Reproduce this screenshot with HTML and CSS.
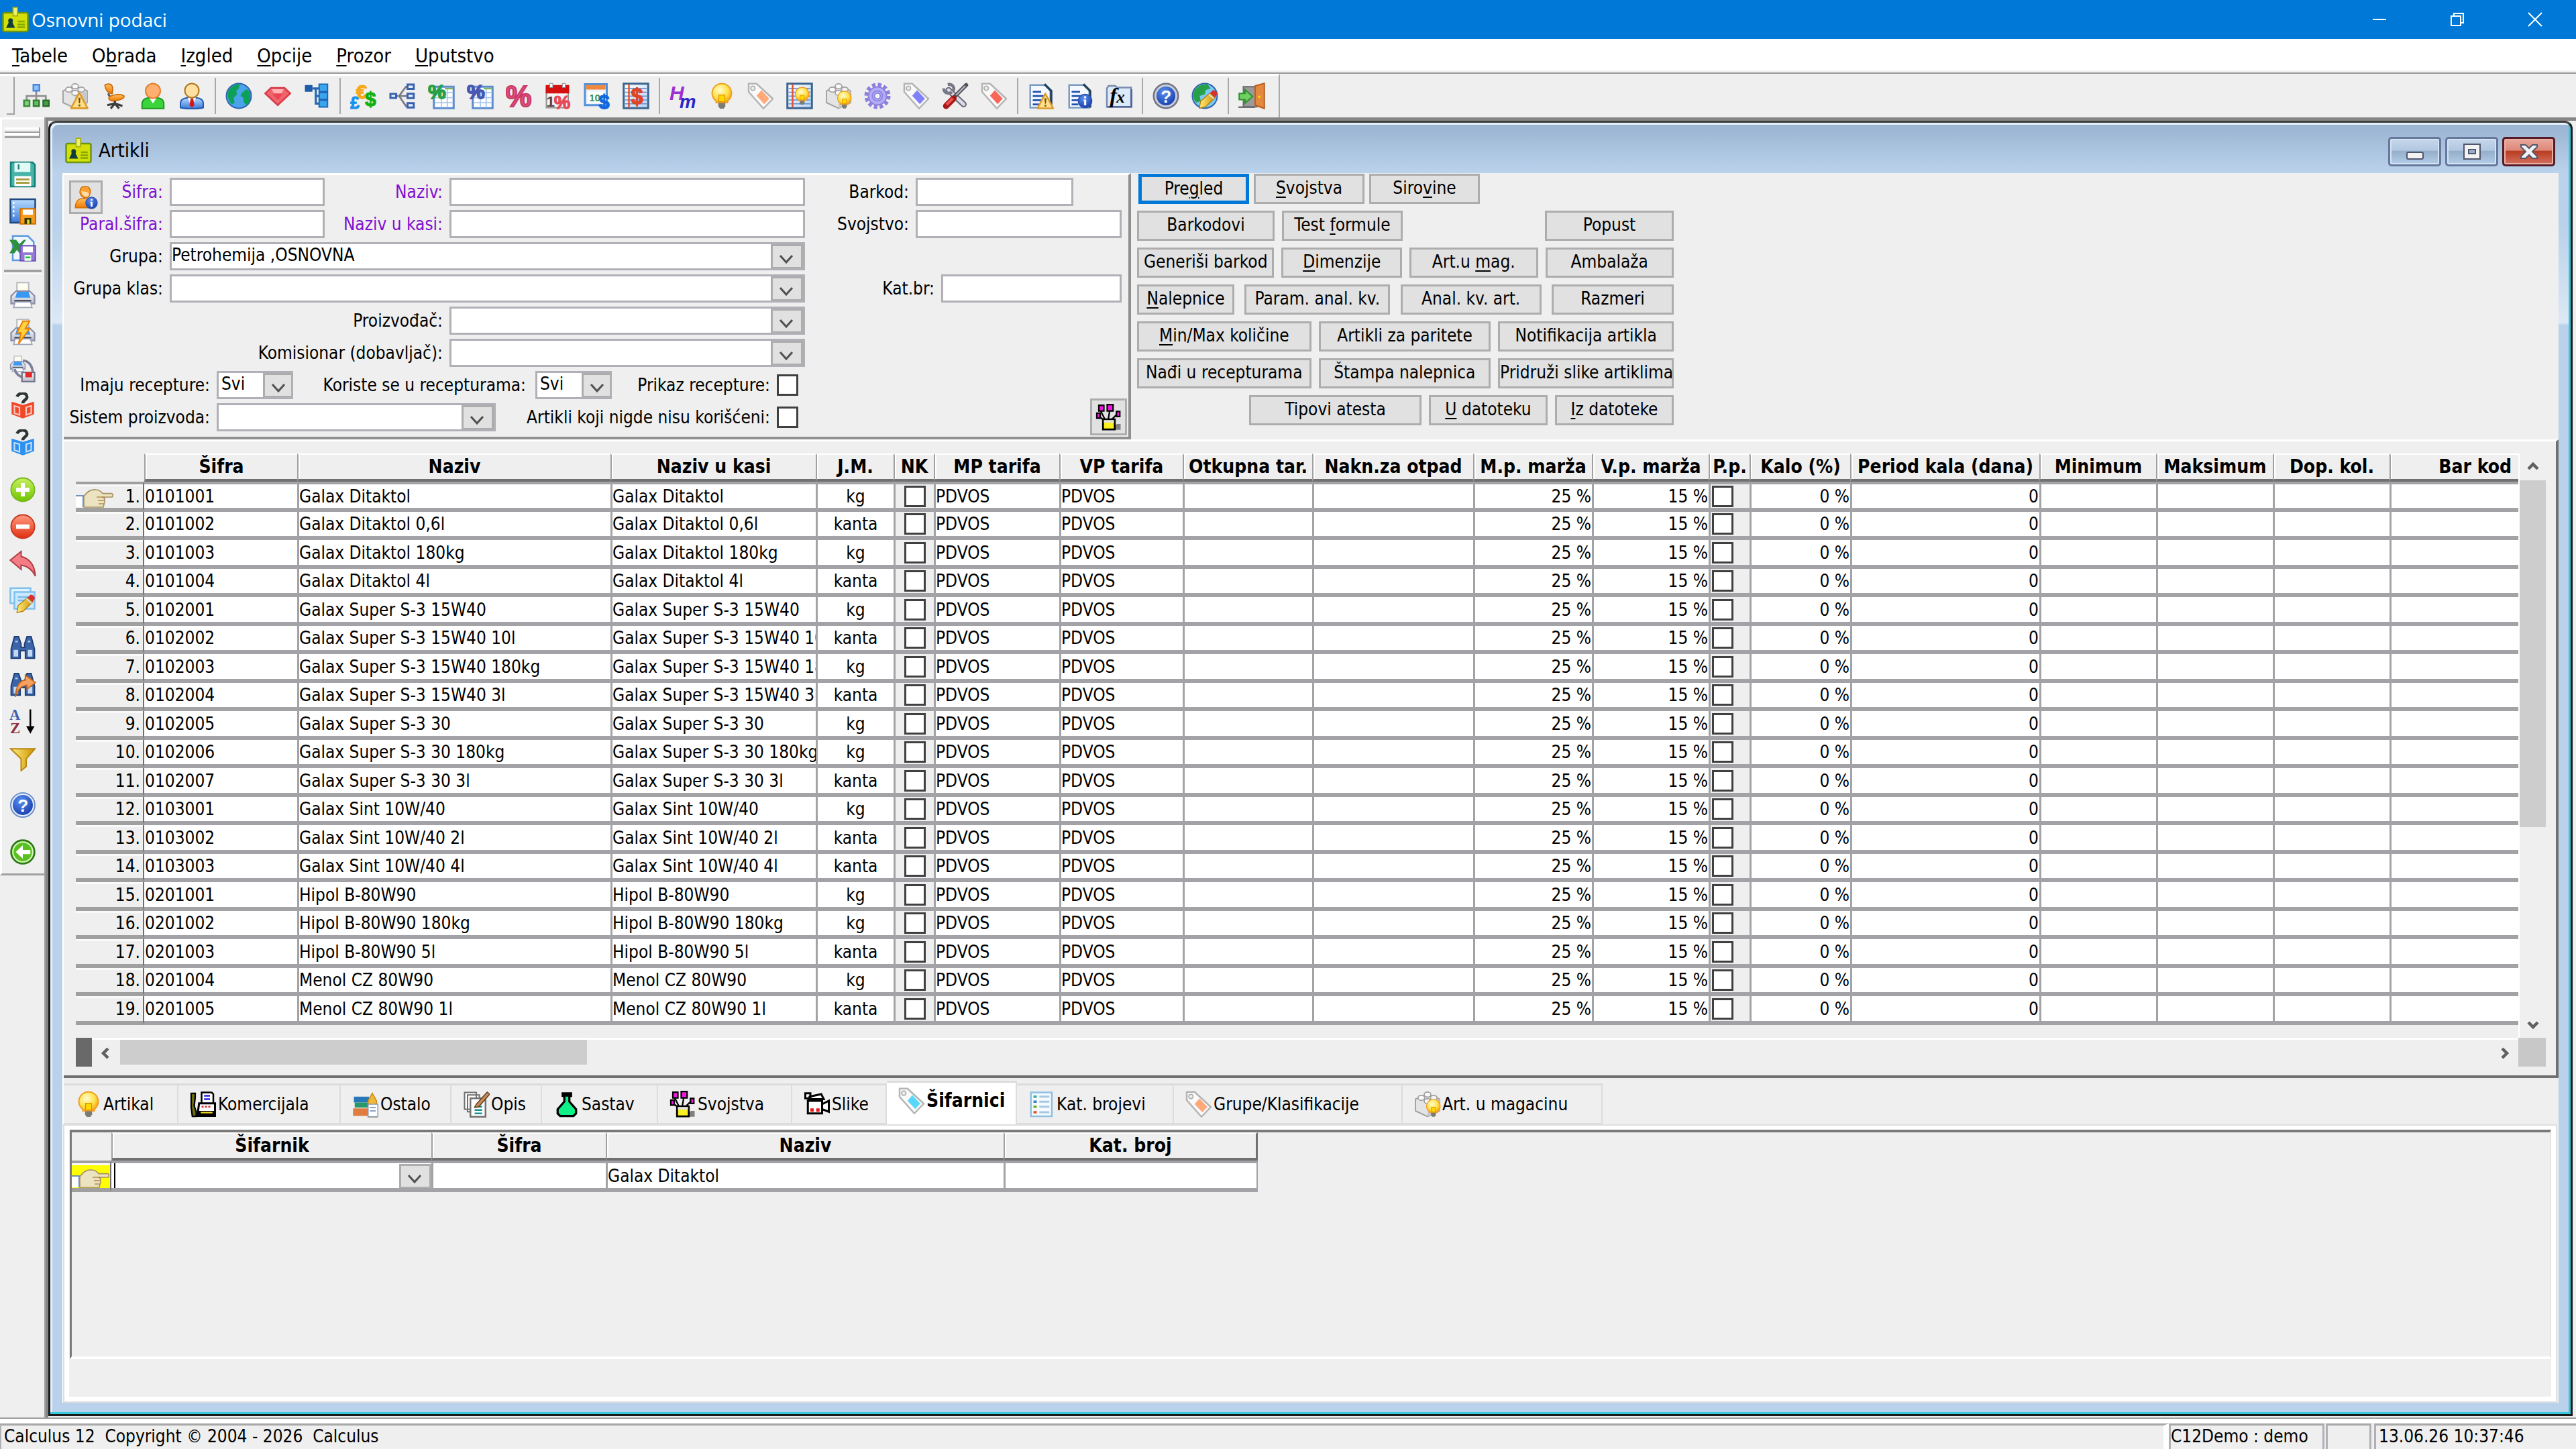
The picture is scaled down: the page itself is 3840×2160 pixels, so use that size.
FILE: index.html
```html
<!DOCTYPE html>
<html lang="sr-Latn">
<head>
<meta charset="utf-8">
<title>Osnovni podaci</title>
<link rel="stylesheet" href="styles.css">
</head>
<body>
<svg class="sprite" width="0" height="0" aria-hidden="true">
  <defs>
    <linearGradient id="g-green" x1="0" y1="0" x2="0" y2="1"><stop offset="0" stop-color="#c8f060"/><stop offset="1" stop-color="#6fc400"/></linearGradient>
    <linearGradient id="g-red" x1="0" y1="0" x2="0" y2="1"><stop offset="0" stop-color="#ff9a80"/><stop offset="1" stop-color="#e03010"/></linearGradient>
    <linearGradient id="g-gold" x1="0" y1="0" x2="1" y2="0"><stop offset="0" stop-color="#fff080"/><stop offset="1" stop-color="#d09000"/></linearGradient>
    <linearGradient id="g-blue" x1="0" y1="0" x2="0" y2="1"><stop offset="0" stop-color="#b8dcff"/><stop offset="1" stop-color="#3a7ad8"/></linearGradient>
    <linearGradient id="g-gray" x1="0" y1="0" x2="0" y2="1"><stop offset="0" stop-color="#fff"/><stop offset="1" stop-color="#b8bcc8"/></linearGradient>
    <linearGradient id="g-orange" x1="0" y1="0" x2="0" y2="1"><stop offset="0" stop-color="#ffc060"/><stop offset="1" stop-color="#f07800"/></linearGradient>
    <radialGradient id="g-bulb" cx=".4" cy=".35" r=".7"><stop offset="0" stop-color="#fffbd0"/><stop offset=".6" stop-color="#ffe24a"/><stop offset="1" stop-color="#f8a010"/></radialGradient>
    <radialGradient id="g-help" cx=".4" cy=".3" r=".8"><stop offset="0" stop-color="#5a90f0"/><stop offset="1" stop-color="#1238a8"/></radialGradient>
    <linearGradient id="g-sheet" x1="0" y1="0" x2="1" y2="1"><stop offset="0" stop-color="#fff"/><stop offset="1" stop-color="#b8d4f4"/></linearGradient>
  </defs>
  <symbol id="card" viewBox="0 0 16 16"><rect x=".6" y="4" width="14.8" height="11.2" rx="1" fill="#d2df08" stroke="#6c9410"/><path d="M6.6 .8h2.6v5H6.6z" fill="#f0f070" stroke="#a8b010" stroke-width=".7"/><path d="M2.4 13h5.4l-1.5-3 .2-1.3a1.4 1.4 0 0 0-2.8 0l.2 1.3z" fill="#123c3c"/><path d="M9.5 9.2h4M9.2 11h4.5M9.2 12.6h4.5" stroke="#84a800" stroke-width="1"/></symbol>
  <symbol id="warn" viewBox="0 0 16 16"><path d="M8 1L15.5 15H.5z" fill="#ffe08a" stroke="#dd9a2c" stroke-width="1.6" stroke-linejoin="round"/><path d="M7.2 5.5h1.8l-.4 5h-1zM7.3 11.6h1.6v1.6H7.3z" fill="#7a4a00"/></symbol>
  <symbol id="info" viewBox="0 0 16 16"><circle cx="8" cy="8" r="7.2" fill="url(#g-help)" stroke="#2a50b0"/><path d="M7 3h2.2v2.2H7zM6.4 6.6h2.8v6H7V8h-.6z" fill="#fff"/></symbol>
  <symbol id="bulb" viewBox="0 0 16 16"><path d="M8 .6a5.8 5.8 0 0 0-3.4 10.5V12h6.8v-.9A5.8 5.8 0 0 0 8 .6z" fill="url(#g-bulb)" stroke="#f0a020" stroke-width=".8"/><path d="M6.2 7.4h3.6v4H6.2z" fill="#ffd800" stroke="#e09000" stroke-width=".5"/><path d="M5.9 12.2h4.2v2l-1 1.4H6.900l-1-1.400z" fill="#7c7c74"/></symbol>
  <symbol id="brick" viewBox="0 0 16 16"><path d="M.8 5L8 2l7.200 3v7L8 15.400.8 12z" fill="#e4e4e4" stroke="#a4a4a4" stroke-width=".8"/><path d="M8 8v7.400l7.200-3.400V5z" fill="#c8c8c8"/><ellipse cx="4.300" cy="4.200" rx="2" ry="1.500" fill="#fafafa" stroke="#a0a0a0" stroke-width=".7"/><ellipse cx="8" cy="2.200" rx="2" ry="1.500" fill="#fafafa" stroke="#a0a0a0" stroke-width=".7"/><ellipse cx="11.700" cy="4.200" rx="2" ry="1.500" fill="#f2f2f2" stroke="#a0a0a0" stroke-width=".7"/><ellipse cx="8" cy="6.200" rx="2" ry="1.500" fill="#fafafa" stroke="#a0a0a0" stroke-width=".7"/></symbol>
  <symbol id="tag" viewBox="0 0 16 16"><path d="M.8.7h4.700L15.200 9.700 9.600 15.500.8 5.600z" fill="#fafafa" stroke="#b4b4b4" stroke-linejoin="round"/><circle cx="3.300" cy="3.400" r="1.300" fill="#eee" stroke="#b0b0b0" stroke-width=".7"/><path d="M8.400 4.600l4.700 5-3 3.300-4.600-5z" fill="currentColor"/></symbol>
  <symbol id="doc" viewBox="0 0 16 16"><path d="M1.500 1.500h9l3 3V15h-12z" fill="#f4f9ff" stroke="#7a9cc4"/><path d="M10 1l4 4v10" fill="none" stroke="#24405c" stroke-width="1.400"/><path d="M3 5.500h5M3 8h7M3 10.500h6M3 13h4" stroke="#2050b0" stroke-width="1.100"/></symbol>
  <symbol id="sheet" viewBox="0 0 16 16"><path d="M3.500 2.500h11.800v12.800H3.500z" fill="#fff" stroke="#5b8cd0" stroke-width="1.200"/><path d="M4 6h11M4 9h11M4 12h11M8 3v12M11.500 3v12" stroke="#a9c6ee" stroke-width=".7"/><path d="M10 3.600h5" stroke="#80b860"/></symbol>
  <symbol id="note" viewBox="0 0 16 16"><path d="M.7.700h14.600v14.600H.7z" fill="url(#g-sheet)" stroke="#3a6590" stroke-width="1.200"/><path d="M1.500 3.500h13M1.500 5.800h13M1.500 8.100h13M1.500 10.400h13M1.500 12.700h13" stroke="#5c8fd0" stroke-width=".6"/><path d="M3.800 1v14" stroke="#e85030"/></symbol>
  <symbol id="org" viewBox="0 0 16 16"><path d="M8 5v3M2.300 11V8h11.400v3M8 8v3" fill="none" stroke="#909090" stroke-width="1.100"/><rect x="6.300" y="1.300" width="3.600" height="3.600" fill="#8ec0ff" stroke="#4a86dc"/><rect x=".7" y="10.700" width="3.300" height="3.400" fill="#80d080" stroke="#389038"/><rect x="6.400" y="10.700" width="3.300" height="3.400" fill="#60c060" stroke="#308030"/><rect x="12.200" y="10.700" width="3.300" height="3.400" fill="#48a048" stroke="#286c28"/></symbol>
  <symbol id="brickwarn" viewBox="0 0 16 16"><use href="#brick"/><use href="#warn" x="5" y="5.500" width="11" height="10.500"/></symbol>
  <symbol id="chair" viewBox="0 0 16 16"><path d="M2.500 1.500C5 0 7 1 7.200 3.500L7 6.500C5 7 3 5 2.500 1.500z" fill="url(#g-orange)" stroke="#c46000" stroke-width=".6"/><path d="M4.500 6.500l1.500 3" stroke="#555" stroke-width="1.200"/><path d="M5 8.500c3-1.500 7-2 9-.5.500 1.500-3 3-7 3C5.500 10.800 4.500 9.800 5 8.500z" fill="url(#g-orange)" stroke="#c46000" stroke-width=".6"/><path d="M8.500 11v2M4 13.500l4.500-1 4.500 1.500M8.500 12.500L6 15.500M8.500 12.500l2.500 3" fill="none" stroke="#3c3c3c" stroke-width="1.300"/></symbol>
  <symbol id="usergreen" viewBox="0 0 16 16"><path d="M1.500 15.500V13c0-3 2-4 6.500-4s6.500 1 6.500 4v2.500z" fill="#3cd43c" stroke="#1a9a20" stroke-width=".8"/><path d="M6 9.500h4L8 12.500z" fill="#fff"/><circle cx="8" cy="5" r="4.400" fill="#ffb070" stroke="#e08030" stroke-width=".8"/></symbol>
  <symbol id="userblue" viewBox="0 0 16 16"><path d="M1.200 15V12.500C1.200 10 3 9 8 9s6.800 1 6.800 3.500V15c-3 .8-10.600.8-13.600 0z" fill="url(#g-blue)" stroke="#2058b0" stroke-width=".8"/><path d="M5.500 9L8 14.500 10.500 9z" fill="#fff"/><path d="M7.300 9.500h1.500l.7 4L8 15l-1.400-1.500z" fill="#d81818"/><circle cx="8" cy="4.800" r="4.200" fill="#ffe0a0" stroke="#b07820" stroke-width=".8"/></symbol>
  <symbol id="globe" viewBox="0 0 16 16"><circle cx="8" cy="8" r="7.400" fill="#4aa4ec" stroke="#3064b0" stroke-width=".8"/><path d="M2 4.500C4 2 6 1 8.500 1l-.5 2.500L6.500 5 7 7 5 9l.5 3L4 13C1.500 11 .8 7 2 4.500zM10 6l2.500-2L14 5c1.500 3 1 6-1 8.500l-2-1.500-.5-3L9 8z" fill="#0ca058"/></symbol>
  <symbol id="ruby" viewBox="0 0 16 16"><path d="M4 3.200h8L15.500 6.500 8 13.500.5 6.500z" fill="#f0646c" stroke="#d83c48"/><path d="M4.500 4h7L8 11.500z" fill="#ffb4b8"/><path d="M5 6.500h6L8 11z" fill="#ec4450"/></symbol>
  <symbol id="tree" viewBox="0 0 16 16"><path d="M5.500 3.500H10M7.500 3.500V12.500H10M7.500 8H10" fill="none" stroke="#2868b0" stroke-width="1.300"/><path d="M1 1.500h4.500v4H1z" fill="#1c5ca8"/><path d="M9.500 1h5v4.400h-5zM9.500 6h5v4h-5zM9.500 10.600h5v4h-5z" fill="#3aa4ec" stroke="#1c68b4" stroke-width=".8"/></symbol>
  <symbol id="money" viewBox="0 0 16 16"><text x="3.500" y="9.500" class="g" font-size="12" fill="#f8a818" stroke="#f8a818" stroke-width=".4">€</text><text x="0" y="15.500" class="g" font-size="10" fill="#1890f0" stroke="#1890f0" stroke-width=".4">£</text><text x="8.800" y="14" class="g" font-size="12" fill="#10b010" stroke="#10b010" stroke-width=".4">$</text></symbol>
  <symbol id="net" viewBox="0 0 16 16"><path d="M4 8h3M12 2.500h-2L6 8l4 6h2M6 8h5" fill="none" stroke="#7c7c84" stroke-width="1.100"/><path d="M.8 6.800h3.400v2.400H.8zM11 1.200h3.700v2.600H11zM11 6.700h3.700v2.600H11zM11 12.300h3.700v2.600H11z" fill="#e8f0ff" stroke="#3860b0" stroke-width="1.200"/></symbol>
  <symbol id="pctgreen" viewBox="0 0 16 16"><use href="#sheet"/><text x="0" y="9.500" class="g" font-size="12" fill="#28a048" stroke="#28a048" stroke-width=".7">%</text></symbol>
  <symbol id="pctblue" viewBox="0 0 16 16"><use href="#sheet"/><text x="0" y="9.500" class="g" font-size="12" fill="#4858b0" stroke="#4858b0" stroke-width=".7">%</text></symbol>
  <symbol id="pctpink" viewBox="0 0 16 16"><text x="-.2" y="14.500" class="g" font-size="17.500" fill="#e0507c" stroke="#c83868" stroke-width=".8">%</text></symbol>
  <symbol id="calred" viewBox="0 0 16 16"><path d="M1 3h13v12H1z" fill="#f4f4f4" stroke="#909090" stroke-width=".8"/><path d="M.6 1.500h14v5H.6z" fill="#d41010"/><path d="M3 .5h1.800v2.500H3zM10.500.5h1.800v2.500h-1.800z" fill="#fff" stroke="#888" stroke-width=".4"/><text x="1" y="14.500" class="g" font-size="9" fill="#604040">1</text><text x="5.500" y="15.500" class="g" font-size="11" fill="#e84858" stroke="#e84858" stroke-width=".5">%</text></symbol>
  <symbol id="calusd" viewBox="0 0 16 16"><path d="M.8 1h13v12.500H.8z" fill="#eaf4ff" stroke="#5090d8" stroke-width="1.200"/><path d="M1.500 1.500h11.600v2.700H1.500z" fill="#f08840"/><path d="M2.800 5.500h9v6.500h-9z" fill="#fff"/><text x="3.300" y="11" class="g" font-size="6" fill="#389048">10</text><text x="9" y="15.500" class="g" font-size="11.500" fill="#1068e0" stroke="#1068e0" stroke-width=".5">$</text></symbol>
  <symbol id="noteusd" viewBox="0 0 16 16"><use href="#note"/><text x="5" y="12.700" class="g" font-size="13" fill="#e04424" stroke="#e04424" stroke-width=".5">$</text></symbol>
  <symbol id="hm" viewBox="0 0 16 16"><text x="0" y="10.500" class="g" font-size="12" font-style="italic" fill="#9c30d0">H</text><text x="6" y="15" class="g" font-size="11" font-style="italic" fill="#2828c8">m</text></symbol>
  <symbol id="notebulb" viewBox="0 0 16 16"><use href="#note"/><use href="#bulb" x="4" y="2" width="11" height="12"/></symbol>
  <symbol id="brickbulb" viewBox="0 0 16 16"><use href="#brick"/><use href="#bulb" x="6" y="4.500" width="11" height="11.500"/></symbol>
  <symbol id="gear" viewBox="0 0 16 16"><circle cx="8" cy="8" r="6.600" fill="none" stroke="#8c80dc" stroke-width="2.400" stroke-dasharray="2.070 1.386"/><circle cx="8" cy="8" r="5.400" fill="#b4acf8" stroke="#8c80dc" stroke-width=".8"/><circle cx="8" cy="8" r="3" fill="none" stroke="#9086e0" stroke-width=".8"/><circle cx="8" cy="8" r="1.700" fill="#f4f4fc" stroke="#8c80dc" stroke-width=".7"/></symbol>
  <symbol id="tools" viewBox="0 0 16 16"><path d="M4 4.500l9 8.500" stroke="#686878" stroke-width="3.600" stroke-linecap="round"/><path d="M4 4.500l9 8.500" stroke="#dcdce4" stroke-width="2" stroke-linecap="round"/><path d="M1.200 3.500C1 6.200 4 7.200 6 5.700M3.500 1.200c3-.5 4.500 2 3 4.300" stroke="#787888" stroke-width="1.800" fill="none"/><path d="M14.500 1.500L8 8" stroke="#505058" stroke-width="2.400" stroke-linecap="round"/><path d="M14 2L8.500 7.500" stroke="#b8b8c4" stroke-width=".9"/><path d="M7 9.500L2.500 14" stroke="#a81818" stroke-width="3.600" stroke-linecap="round"/><path d="M6.500 9.500L2.800 13.200" stroke="#f05050" stroke-width="1.600"/></symbol>
  <symbol id="docwarn" viewBox="0 0 16 16"><use href="#doc"/><use href="#warn" x="5" y="6" width="11" height="10"/></symbol>
  <symbol id="docinfo" viewBox="0 0 16 16"><use href="#doc"/><use href="#info" x="6.500" y="6.500" width="9" height="9"/></symbol>
  <symbol id="fx" viewBox="0 0 16 16"><path d="M.8 3.500l1-1.500h4l1 1h8.400V14.500H.8z" fill="#dcebfb" stroke="#7a8cb0"/><path d="M1 14.500h14.500V4" fill="none" stroke="#506898"/><text x="2.500" y="12" class="s" font-size="13" fill="#000">f</text><text x="6.500" y="12" class="s" font-size="10" fill="#000">x</text></symbol>
  <symbol id="help" viewBox="0 0 16 16"><circle cx="8" cy="8" r="7.300" fill="#c8ccd8" stroke="#707480"/><circle cx="8" cy="8" r="5.600" fill="url(#g-help)"/><text x="4.900" y="11.900" class="g" font-size="10.500" fill="#fff">?</text></symbol>
  <symbol id="helpblue" viewBox="0 0 16 16"><circle cx="8" cy="8" r="7.200" fill="#e8f0ff" stroke="#7090c8" stroke-width=".8"/><circle cx="8" cy="8" r="6" fill="url(#g-help)"/><text x="4.900" y="11.900" class="g" font-size="10.500" fill="#fff">?</text></symbol>
  <symbol id="pencil" viewBox="0 0 16 16"><path d="M1 15l1-5.500L9.500 3l4 3.500L6 14z" fill="url(#g-gold)" stroke="#b07800" stroke-width=".7"/><path d="M9.500 3l2-2c1.500-.8 4 1.200 3.700 3l-1.700 2.500z" fill="#d83030"/><path d="M8.500 4l4 3.500" stroke="#dcdcdc" stroke-width="1.200"/></symbol>
  <symbol id="globeedit" viewBox="0 0 16 16"><circle cx="8" cy="8" r="7.400" fill="#7cc8f4" stroke="#3064b0" stroke-width=".8"/><path d="M2 4.500C4 2 6 1 9.500 1l2 2.500-3 1L8 7 5 8l.5 3L3 12C.8 10 .8 7 2 4.500z" fill="#28a048"/><use href="#pencil" x="4" y="4" width="12" height="12"/></symbol>
  <symbol id="exit" viewBox="0 0 16 16"><path d="M3 2.500h8v12H3z" fill="#9a9a9a" stroke="#686868" stroke-width=".8"/><path d="M0 14.700h10" stroke="#707070"/><path d="M10 2l5.500-1.500v15L10 13.500z" fill="#e48840" stroke="#b86020" stroke-width=".8"/><circle cx="12.500" cy="8.500" r=".7" fill="#f8e000"/><path d="M.5 6.500H4V4.300L8.500 8.300 4 12.300V10.200H.5z" fill="#70d060" stroke="#2c9030" stroke-width=".8"/></symbol>
  <symbol id="save" viewBox="0 0 16 16"><path d="M.8.800h13l1.400 1.400v13H.8z" fill="#48b4a8" stroke="#128078"/><path d="M3 1h9.500v5.500H3z" fill="#e0fbf6"/><path d="M5.500 2v3" stroke="#208078"/><path d="M3 9h10v6H3z" fill="#fff"/><path d="M4 11h8M4 13h8" stroke="#a8a040" stroke-width="1.200"/></symbol>
  <symbol id="savewin" viewBox="0 0 16 16"><path d="M.6.800h14.800v14H.6z" fill="url(#g-blue)" stroke="#204880"/><path d="M2 3h1M2 5.500h1M2 8h1M2 10.500h1" stroke="#fff" stroke-width="1.200"/><path d="M6.500 6.500h9v9h-9z" fill="#f89c20" stroke="#d07000" stroke-width=".8"/><path d="M8 7h6v3H8z" fill="#fff"/><path d="M9 12h4v3.500H9z" fill="#303800"/><path d="M10.500 13h1.500v2.500h-1.500z" fill="#d8e020"/></symbol>
  <symbol id="savexls" viewBox="0 0 16 16"><path d="M2 .7h9l3.500 3.500v11H2z" fill="#eef6ff" stroke="#5c9cdc"/><path d="M0 3h4l2 2.500L8.500 3H10L7 7l3 4H6L4.500 9 3 11H0l2.500-4z" fill="#2c9040"/><path d="M6.500 6.500h9v9h-9z" fill="#9478d8" stroke="#7050b8" stroke-width=".8"/><path d="M8 7h6v3.500H8z" fill="#fff"/><path d="M9 12h4v3.500H9z" fill="#e8ffe8"/><path d="M9.500 13.500h3" stroke="#20c040"/></symbol>
  <symbol id="printer" viewBox="0 0 16 16"><path d="M4.500.5h7v7h-7z" fill="#fdfdf0" stroke="#b8b8c0" stroke-width=".8"/><path d="M1 8.500L4 5.500h8l3 3v4.500H1z" fill="url(#g-gray)" stroke="#8a8ea8" stroke-width=".9"/><path d="M4.500 6h7l1 3.500h-9z" fill="#3898f4"/><path d="M3 10.800h10v1.500H3z" fill="#485060"/><path d="M3.500 12h9l1 3.300h-11z" fill="#fff" stroke="#a0a4b8" stroke-width=".7"/></symbol>
  <symbol id="printfast" viewBox="0 0 16 16"><use href="#printer"/><path d="M8 1.500h4L9.500 6H12L5.500 15 7 8.500H4.500z" fill="#ffd040" stroke="#e88000" stroke-width=".8"/></symbol>
  <symbol id="printroll" viewBox="0 0 16 16"><use href="#printer" x="0" y="0" width="10" height="10"/><path d="M8 3c4 0 6 4 6 8" fill="none" stroke="#7c8098" stroke-width="1.500"/><path d="M3 8c1 3 3 4.500 5 5" fill="none" stroke="#7c8098" stroke-width="1.500"/><path d="M7.500 10h7.500v5.500H7.500z" fill="url(#g-gray)" stroke="#70748c" stroke-width=".9"/><path d="M9.500 10h4v3h-4z" fill="#e82828"/></symbol>
  <symbol id="book" viewBox="0 0 16 16"><path d="M1.300 5.500L8 7.500v8L1.300 13zM14.700 5.500L8 7.500v8l6.700-2.500z" fill="currentColor"/><path d="M3 8l3 .9v4.500L3 12.400zM10 8.900L13 8v4.400l-3 1z" fill="none" stroke="#fff" stroke-opacity=".7" stroke-width=".9"/><path d="M4.500 2.500C6-.3 10.500 0 10.500 2.700 10.500 4.500 8 4.500 8 6.500" fill="none" stroke="#2c3434" stroke-width="1.800"/></symbol>
  <symbol id="plus" viewBox="0 0 16 16"><circle cx="8" cy="8" r="7" fill="url(#g-green)" stroke="#78b820" stroke-width=".8"/><path d="M8 4v8M4 8h8" stroke="#fff" stroke-width="2.400"/></symbol>
  <symbol id="minus" viewBox="0 0 16 16"><circle cx="8" cy="8" r="7" fill="url(#g-red)" stroke="#c83820" stroke-width=".8"/><path d="M4 8h8" stroke="#fff" stroke-width="2.600"/></symbol>
  <symbol id="undo" viewBox="0 0 16 16"><path d="M.5 6L7 .8v3C12 5 15 9 15.500 15.500 13.500 11.500 11 9.500 7 9v2.500z" fill="#f47c84" stroke="#b04048" stroke-width=".8"/></symbol>
  <symbol id="noteedit" viewBox="0 0 16 16"><path d="M.6.700h12v9H.6z" fill="#dff2ff" stroke="#80c0ec"/><path d="M3 3h12v10H3z" fill="#c8e8ff" stroke="#80c0ec"/><path d="M5 6h7M5 8h5" stroke="#7cb8e8"/><use href="#pencil" x="3.500" y="4" width="12.500" height="12"/></symbol>
  <symbol id="binoc" viewBox="0 0 16 16"><path d="M3 1.500h2.500L7 6v2h2V6l1.500-4.500H13L15 9v5.500H9.500V10h-3v4.500H1V9z" fill="#3c64a8" stroke="#1c3c70" stroke-width=".7"/><path d="M2.500 9.500h2.700v4H2.500zM11 9.500h2.700v4H11z" fill="#c4d8f4"/><path d="M3.500 4.500h1.500M11 4.500h1.500" stroke="#b0c8f0"/></symbol>
  <symbol id="binocnext" viewBox="0 0 16 16"><use href="#binoc"/><path d="M3.500 15.500C4 9 6.500 5.500 9.500 5.500V2.500L15.500 7 10.500 11V8.500C7 9 5 11 3.500 15.500z" fill="#f8a060" stroke="#c06820" stroke-width=".7"/></symbol>
  <symbol id="sort" viewBox="0 0 16 16"><text x="0" y="7" class="sb" font-size="9" fill="#4060b0">A</text><text x=".5" y="15.300" class="sb" font-size="9" fill="#903040">Z</text><path d="M12.500 1v12.500" stroke="#000"/><path d="M10 11h5l-2.500 4.500z" fill="#000"/></symbol>
  <symbol id="funnel" viewBox="0 0 16 16"><path d="M.8 2.500h14.400L10 8.500V13l-3 2.500v-7z" fill="url(#g-gold)" stroke="#b88810" stroke-width=".8"/></symbol>
  <symbol id="back" viewBox="0 0 16 16"><circle cx="8" cy="8" r="7" fill="#58c020" stroke="#307818"/><circle cx="8" cy="8" r="5.900" fill="none" stroke="#d8f4c0" stroke-width=".8"/><path d="M12.500 6.800v2.500H8V12L3.800 8 8 4v2.800z" fill="#fff"/></symbol>
  <symbol id="userinfo" viewBox="0 0 16 16"><path d="M1 15c0-4 1.500-6 5-6.300 4 0 6 2 6 6.300z" fill="url(#g-orange)" stroke="#d07000" stroke-width=".6"/><path d="M4 5C4 1.500 6 .5 8 .8c3 .2 3.500 3 2.500 5.500C9.500 9 5.500 9.500 4 5z" fill="#f8a030" stroke="#c86800" stroke-width=".6"/><path d="M5 4l4 .5 1.300 1.500C9.500 8.500 6 8.500 5 4z" fill="#ffdca8"/><use href="#info" x="7.500" y="7.500" width="8.500" height="8.500"/></symbol>
  <symbol id="flowers" viewBox="0 0 16 16"><path d="M6 15.500h9V12h-2z" fill="#808080"/><path d="M3 4l3 6M8.500 4L7.500 10M12.500 6.500L9 10M2 7.500L5.500 10" stroke="#000" stroke-width=".9"/><path d="M2 .8h3v3.400H2zM7 .4h3.500v3.800H7zM.8 5.500h2v3h-2zM12.500 4.500h2v3h-2z" fill="#f018e0" stroke="#000" stroke-width=".9"/><path d="M4.500 9.200h7v6h-7z" fill="#f8f020" stroke="#000" stroke-width="1.100"/><path d="M5 9.700h6v1.500H5z" fill="#e0e0e0"/></symbol>
  <symbol id="fax" viewBox="0 0 16 16"><path d="M.8 1.500h2.400v2.400L2.600 9l1.200 3.500v2.700H1.500L.8 10z" fill="#6c7010" stroke="#000" stroke-width=".9"/><path d="M7 1h6l1 1v6H7z" fill="#fff" stroke="#000"/><path d="M8.500 3h3.500M8.500 5h3.500" stroke="#2020f0"/><path d="M5.500 7.500h9.500V15H4.500z" fill="#fff" stroke="#000" stroke-width="1.200"/><path d="M7 9.500h6" stroke="#f02020" stroke-dasharray="1.200 .8"/><path d="M5 12h10v3H5z" fill="#000"/><path d="M6.500 13h7" stroke="#f0e020" stroke-width=".9"/></symbol>
  <symbol id="books" viewBox="0 0 16 16"><path d="M1 3.500h9v3.500H1z" fill="#2878b8"/><path d="M1.500 7h9v3H1.500z" fill="#28986c"/><path d="M.5 10.500h10V15H.5z" fill="#e07c40"/><path d="M9.500 6L12 1.500 14.500 6v9.500h-5z" fill="#f4b838" stroke="#c89020" stroke-width=".7"/><path d="M9.500 8h5.800v7.500H9.500z" fill="#fff" stroke="#8898b0" stroke-width=".6"/><path d="M10.500 10h3.500M10.500 12h3.500" stroke="#8ca0c8" stroke-width=".8"/></symbol>
  <symbol id="opis" viewBox="0 0 16 16"><path d="M1 1h7v10H1zM2.800 2.500h7v10h-7z" fill="#fff" stroke="#707070" stroke-width=".8"/><path d="M4.500 4.500h9v11h-9z" fill="#fff" stroke="#707070"/><path d="M7 9.500h4.500M7 11.500h4.500M7 13.500h4.500" stroke="#189090"/><path d="M14.500.8L16 2 9.500 9.500 7 10l1-2z" fill="#c88c58" stroke="#604020" stroke-width=".6"/></symbol>
  <symbol id="flask" viewBox="0 0 16 16"><path d="M5.500 1.500h5v1.500h-1v3.500L13.500 11v2.500l-1.500 1.500H4L2.500 13.500V11l4-4.500V3h-1z" fill="#10f088" stroke="#000" stroke-width="1.300"/><path d="M5.500 1.500h5v2h-5z"/></symbol>
  <symbol id="camera" viewBox="0 0 16 16"><path d="M1 1.500h3v3H1zM3.500 3.500l7-1.500 1.500 3H3z" fill="#fff" stroke="#000" stroke-width="1.200"/><path d="M2.500 6h8.500v7.500h-8.500z" fill="#fff" stroke="#000" stroke-width="1.200"/><path d="M11 8l4-2v6.500l-4-1.500z" fill="#fff" stroke="#000" stroke-width="1.200"/><path d="M4 10.500h2v2H4zM7.500 10.500h2v2h-2z" fill="#e81818"/></symbol>
  <symbol id="list" viewBox="0 0 16 16"><path d="M1.500 1h12.500v14.200H1.500z" fill="#f4faff" stroke="#90c0e0"/><path d="M3 3.500h2" stroke="#30b0a0" stroke-width="1.400"/><path d="M3 6.500h2" stroke="#4080d0" stroke-width="1.400"/><path d="M3 9.500h2" stroke="#70b020" stroke-width="1.400"/><path d="M3 12.800h2" stroke="#e05030" stroke-width="1.400"/><path d="M6.500 3.500h6M6.500 6.500h6M6.500 9.500h6M6.500 12.800h6" stroke="#a8c8e0" stroke-width="1.200"/></symbol>
  <symbol id="hand" viewBox="0 0 28 15"><path d="M0 6.500h5.500V15H0z" fill="#fff"/><path d="M0 6.500h5.500V15" fill="none" stroke="#4870b0" stroke-width=".8"/><path d="M6 7c2-3 5-5.500 9-5 2 .2 4 1.500 5 2.800h6.500c1.500 0 1.500 2.700 0 2.700H20l1.500 1v2.500L20.500 15H6z" fill="#ece4c0" stroke="#a89060" stroke-width=".8"/><path d="M15.500 7.500h6M16.500 10h5M17 12.500h4" stroke="#b08c50" stroke-width=".8"/></symbol>
  <symbol id="chev" viewBox="0 0 20 20"><path d="M3 13l7-7 7 7" fill="none" stroke="#606060" stroke-width="4.500"/></symbol>
</svg>

<header class="titlebar">
  <svg class="icon"><use href="#card"/></svg>
  <h1>Osnovni podaci</h1>
  <div class="winctl">
    <button aria-label="Minimiziraj"><svg viewBox="0 0 20 20"><path d="M0 10h20"/></svg></button>
    <button aria-label="Vrati"><svg viewBox="0 0 20 20"><path d="M1 5h14v14H1zM5 5V1h14v14h-4"/></svg></button>
    <button aria-label="Zatvori"><svg viewBox="0 0 20 20"><path d="M0 0l20 20M20 0L0 20"/></svg></button>
  </div>
</header>
<nav class="menu">
  <a href="#"><u>T</u>abele</a><a href="#">O<u>b</u>rada</a><a href="#"><u>I</u>zgled</a><a href="#"><u>O</u>pcije</a><a href="#"><u>P</u>rozor</a><a href="#"><u>U</u>putstvo</a>
</nav>
<div class="toolbar">
  <div class="tools">
    <div class="group">
      <button aria-label="Organizacija"><svg class="icon"><use href="#org"/></svg></button>
      <button aria-label="Artikli"><svg class="icon"><use href="#brickwarn"/></svg></button>
      <button aria-label="Radna mesta"><svg class="icon"><use href="#chair"/></svg></button>
      <button aria-label="Radnici"><svg class="icon"><use href="#usergreen"/></svg></button>
      <button aria-label="Partneri"><svg class="icon"><use href="#userblue"/></svg></button>
    </div>
    <div class="group">
      <button aria-label="Mesta"><svg class="icon"><use href="#globe"/></svg></button>
      <button aria-label="Vrednosti"><svg class="icon"><use href="#ruby"/></svg></button>
      <button aria-label="Struktura"><svg class="icon"><use href="#tree"/></svg></button>
    </div>
    <div class="group">
      <button aria-label="Valute"><svg class="icon"><use href="#money"/></svg></button>
      <button aria-label="Veze"><svg class="icon"><use href="#net"/></svg></button>
      <button aria-label="Tarife"><svg class="icon"><use href="#pctgreen"/></svg></button>
      <button aria-label="Stope"><svg class="icon"><use href="#pctblue"/></svg></button>
      <button aria-label="Popusti"><svg class="icon"><use href="#pctpink"/></svg></button>
      <button aria-label="Kamate"><svg class="icon"><use href="#calred"/></svg></button>
      <button aria-label="Kursna lista"><svg class="icon"><use href="#calusd"/></svg></button>
      <button aria-label="Cenovnik"><svg class="icon"><use href="#noteusd"/></svg></button>
    </div>
    <div class="group">
      <button aria-label="Jedinice mere"><svg class="icon"><use href="#hm"/></svg></button>
      <button aria-label="Artikal"><svg class="icon"><use href="#bulb"/></svg></button>
      <button aria-label="Grupe"><svg class="icon c-orange"><use href="#tag"/></svg></button>
      <button aria-label="Katalog"><svg class="icon"><use href="#notebulb"/></svg></button>
      <button aria-label="Magacin"><svg class="icon"><use href="#brickbulb"/></svg></button>
      <button aria-label="Parametri"><svg class="icon"><use href="#gear"/></svg></button>
      <button aria-label="Klasifikacije"><svg class="icon c-violet"><use href="#tag"/></svg></button>
      <button aria-label="Alati"><svg class="icon"><use href="#tools"/></svg></button>
      <button aria-label="Oznake"><svg class="icon c-red"><use href="#tag"/></svg></button>
    </div>
    <div class="group">
      <button aria-label="Upozorenja"><svg class="icon"><use href="#docwarn"/></svg></button>
      <button aria-label="Informacije"><svg class="icon"><use href="#docinfo"/></svg></button>
      <button aria-label="Formule"><svg class="icon"><use href="#fx"/></svg></button>
    </div>
    <div class="group">
      <button aria-label="Pomoć"><svg class="icon"><use href="#help"/></svg></button>
      <button aria-label="Izmene"><svg class="icon"><use href="#globeedit"/></svg></button>
    </div>
    <div class="group">
      <button aria-label="Izlaz"><svg class="icon"><use href="#exit"/></svg></button>
    </div>
  </div>
</div>

<div class="workspace">
  <aside class="side">
    <div class="sidebar">
      <div class="grip"></div>
      <div class="sgroup">
        <button aria-label="Snimi"><svg class="icon"><use href="#save"/></svg></button>
        <button aria-label="Snimi prikaz"><svg class="icon"><use href="#savewin"/></svg></button>
        <button aria-label="Snimi u Excel"><svg class="icon"><use href="#savexls"/></svg></button>
      </div>
      <div class="sgroup ruled">
        <button aria-label="Štampa"><svg class="icon"><use href="#printer"/></svg></button>
        <button aria-label="Brza štampa"><svg class="icon"><use href="#printfast"/></svg></button>
        <button aria-label="Podešavanje štampe"><svg class="icon"><use href="#printroll"/></svg></button>
        <button aria-label="Upit"><svg class="icon c-book"><use href="#book"/></svg></button>
        <button aria-label="Izvrši upit"><svg class="icon c-sky"><use href="#book"/></svg></button>
      </div>
      <div class="sgroup">
        <button aria-label="Dodaj"><svg class="icon"><use href="#plus"/></svg></button>
        <button aria-label="Obriši"><svg class="icon"><use href="#minus"/></svg></button>
        <button aria-label="Poništi"><svg class="icon"><use href="#undo"/></svg></button>
        <button aria-label="Izmeni"><svg class="icon"><use href="#noteedit"/></svg></button>
      </div>
      <div class="sgroup">
        <button aria-label="Traži"><svg class="icon"><use href="#binoc"/></svg></button>
        <button aria-label="Traži dalje"><svg class="icon"><use href="#binocnext"/></svg></button>
        <button aria-label="Sortiraj"><svg class="icon"><use href="#sort"/></svg></button>
        <button aria-label="Filter"><svg class="icon"><use href="#funnel"/></svg></button>
      </div>
      <div class="sgroup"><button aria-label="Pomoć za formu"><svg class="icon"><use href="#helpblue"/></svg></button></div>
      <div class="sgroup"><button aria-label="Nazad"><svg class="icon"><use href="#back"/></svg></button></div>
    </div>
  </aside>

  <div class="mdi">
    <section class="window">
      <header class="caption">
        <svg class="icon"><use href="#card"/></svg>
        <h2>Artikli</h2>
        <div class="capctl">
          <button aria-label="Minimiziraj prozor"><svg viewBox="0 0 28 24"><rect x="2" y="13" width="24" height="10" rx="2"/></svg></button>
          <button aria-label="Vrati prozor"><svg viewBox="0 0 28 24"><path fill-rule="evenodd" d="M2 1h24v22H2zM9 9h10v6H9z"/></svg></button>
          <button class="close" aria-label="Zatvori prozor"><svg viewBox="0 0 28 24"><path d="M2 2h7l5 5 5-5h7v3l-7 7 7 7v3h-7l-5-5-5 5H2v-3l7-7-7-7z"/></svg></button>
        </div>
      </header>
      <div class="content">
        <div class="top">
          <form class="filter">
            <button type="button" class="info" aria-label="Podaci o korisniku"><svg class="icon"><use href="#userinfo"/></svg></button>
            <label class="key c1" for="sifra">Šifra:</label><input id="sifra" type="text">
            <label class="key" for="naziv">Naziv:</label><input id="naziv" type="text">
            <label for="barkod">Barkod:</label><input id="barkod" class="short" type="text">
            <label class="key c1" for="paral">Paral.šifra:</label><input id="paral" type="text">
            <label class="key" for="kasa">Naziv u kasi:</label><input id="kasa" type="text">
            <label for="svojstvo">Svojstvo:</label><input id="svojstvo" class="long" type="text">
            <label class="c1" for="grupa">Grupa:</label><select id="grupa" class="wide"><option>Petrohemija ,OSNOVNA</option></select>
            <label class="c1" for="klas">Grupa klas:</label><select id="klas" class="wide"><option></option></select>
            <div class="katbr"><label for="katbr">Kat.br:</label><input id="katbr" type="text"></div>
            <label class="span3" for="proizv">Proizvođač:</label><select id="proizv"><option></option></select>
            <label class="span3" for="komis">Komisionar (dobavljač):</label><select id="komis"><option></option></select>
            <div class="line">
              <label class="l1" for="imaju">Imaju recepture:</label><select id="imaju" class="tiny"><option>Svi</option></select>
              <label class="l2" for="koriste">Koriste se u recepturama:</label><select id="koriste" class="tiny"><option>Svi</option></select>
              <label class="l3" for="prikaz">Prikaz recepture:</label><input id="prikaz" type="checkbox">
            </div>
            <div class="line">
              <label class="l1" for="sistem">Sistem proizvoda:</label><select id="sistem" class="medium"><option></option></select>
              <label class="l4" for="nigde">Artikli koji nigde nisu korišćeni:</label><input id="nigde" type="checkbox">
            </div>
            <button type="button" class="flower" aria-label="Svojstva artikla"><svg class="icon"><use href="#flowers"/></svg></button>
          </form>
          <div class="actions">
            <div class="arow first"><button class="w165 current">Pre<u>g</u>led</button><button class="w165"><u>S</u>vojstva</button><button class="w165">Siro<u>v</u>ine</button></div>
            <div class="arow"><button class="w205">Barkodovi</button><button class="w180">Test <u>f</u>ormule</button><button class="w192 end">Popust</button></div>
            <div class="arow"><button class="w205">Generiši barkod</button><button class="w180"><u>D</u>imenzije</button><button class="w192">Art.u <u>m</u>ag.</button><button class="w192">Ambalaža</button></div>
            <div class="arow spread"><button class="w145"><u>N</u>alepnice</button><button class="w217">Param. anal. kv.</button><button class="w210">Anal. kv. art.</button><button class="w182">Razmeri</button></div>
            <div class="arow"><button class="w260"><u>M</u>in/Max količine</button><button class="w257">Artikli za paritete</button><button class="w262">Notifikacija artikla</button></div>
            <div class="arow"><button class="w260">Nađi u recepturama</button><button class="w257">Štampa nalepnica</button><button class="w262">Pridruži slike artiklima</button></div>
            <div class="arow right"><button class="w257">Tipovi atesta</button><button class="w177"><u>U</u> datoteku</button><button class="w177"><u>I</u>z datoteke</button></div>
          </div>
        </div>

        <div class="gridpanel">
          <table class="grid">
            <colgroup>
              <col class="k-no"><col class="k-sif"><col class="k-naz"><col class="k-kasa"><col class="k-jm"><col class="k-nk"><col class="k-mp"><col class="k-vp"><col class="k-otk"><col class="k-nak"><col class="k-mpm"><col class="k-vpm"><col class="k-pp"><col class="k-kalo"><col class="k-per"><col class="k-min"><col class="k-max"><col class="k-dop"><col>
            </colgroup>
            <thead><tr><td></td><th>Šifra</th><th>Naziv</th><th>Naziv u kasi</th><th>J.M.</th><th>NK</th><th>MP tarifa</th><th>VP tarifa</th><th>Otkupna tar.</th><th>Nakn.za otpad</th><th>M.p. marža</th><th>V.p. marža</th><th>P.p.</th><th>Kalo (%)</th><th>Period kala (dana)</th><th>Minimum</th><th>Maksimum</th><th>Dop. kol.</th><th class="cut">Bar kod</th></tr></thead>
            <tbody id="rows"></tbody>
          </table>
          <div class="vscroll"><button aria-label="Gore"><svg><use href="#chev"/></svg></button><div class="vthumb"></div><button aria-label="Dole"><svg class="down"><use href="#chev"/></svg></button></div>
          <div class="hscroll"><div class="splitter"></div><button aria-label="Levo"><svg class="left"><use href="#chev"/></svg></button><div class="htrack"><div class="hthumb"></div></div><button aria-label="Desno"><svg class="rightward"><use href="#chev"/></svg></button></div>
          <div class="corner"></div>
        </div>

        <div class="tabs" role="tablist">
          <button role="tab"><svg class="icon"><use href="#bulb"/></svg>Artikal</button>
          <button role="tab"><svg class="icon"><use href="#fax"/></svg>Komercijala</button>
          <button role="tab"><svg class="icon"><use href="#books"/></svg>Ostalo</button>
          <button role="tab"><svg class="icon"><use href="#opis"/></svg>Opis</button>
          <button role="tab"><svg class="icon"><use href="#flask"/></svg>Sastav</button>
          <button role="tab"><svg class="icon"><use href="#flowers"/></svg>Svojstva</button>
          <button role="tab"><svg class="icon"><use href="#camera"/></svg>Slike</button>
          <button role="tab" aria-selected="true"><svg class="icon c-cyan"><use href="#tag"/></svg>Šifarnici</button>
          <button role="tab"><svg class="icon"><use href="#list"/></svg>Kat. brojevi</button>
          <button role="tab"><svg class="icon c-orange"><use href="#tag"/></svg>Grupe/Klasifikacije</button>
          <button role="tab"><svg class="icon"><use href="#brickbulb"/></svg>Art. u magacinu</button>
        </div>
        <div class="pane">
          <div class="detail">
            <table class="grid small">
              <colgroup><col class="d-no"><col class="d-sk"><col class="d-sif"><col class="d-naz"><col class="d-kat"></colgroup>
              <thead><tr><td></td><th>Šifarnik</th><th>Šifra</th><th>Naziv</th><th>Kat. broj</th></tr></thead>
              <tbody><tr><th class="no" scope="row" aria-label="Tekući red"><svg class="hand"><use href="#hand"/></svg></th><td class="editing"><select aria-label="Šifarnik"><option></option></select></td><td></td><td>Galax Ditaktol</td><td></td></tr></tbody>
            </table>
          </div>
        </div>
      </div>
    </section>
  </div>
</div>

<footer class="status">
  <span class="copy">Calculus 12&nbsp; Copyright © 2004 - 2026&nbsp; Calculus</span>
  <span class="db">C12Demo : demo</span>
  <span class="gap"></span>
  <span class="time">13.06.26 10:37:46</span>
</footer>
<script src="app.js"></script>
</body>
</html>
```
FILE: app.js
```js
// Article list: code, name, unit of measure.
const articles = [
  ["0101001", "Galax Ditaktol", "kg"],
  ["0101002", "Galax Ditaktol 0,6l", "kanta"],
  ["0101003", "Galax Ditaktol 180kg", "kg"],
  ["0101004", "Galax Ditaktol 4l", "kanta"],
  ["0102001", "Galax Super S-3 15W40", "kg"],
  ["0102002", "Galax Super S-3 15W40 10l", "kanta"],
  ["0102003", "Galax Super S-3 15W40 180kg", "kg"],
  ["0102004", "Galax Super S-3 15W40 3l", "kanta"],
  ["0102005", "Galax Super S-3 30", "kg"],
  ["0102006", "Galax Super S-3 30 180kg", "kg"],
  ["0102007", "Galax Super S-3 30 3l", "kanta"],
  ["0103001", "Galax Sint 10W/40", "kg"],
  ["0103002", "Galax Sint 10W/40 2l", "kanta"],
  ["0103003", "Galax Sint 10W/40 4l", "kanta"],
  ["0201001", "Hipol B-80W90", "kg"],
  ["0201002", "Hipol B-80W90 180kg", "kg"],
  ["0201003", "Hipol B-80W90 5l", "kanta"],
  ["0201004", "Menol CZ 80W90", "kg"],
  ["0201005", "Menol CZ 80W90 1l", "kanta"]
];

document.getElementById("rows").innerHTML = articles.map(([code, name, unit], i) => `
  <tr>
    <th class="no" scope="row">${i === 0 ? '<svg class="hand"><use href="#hand"/></svg>' : ""}${i + 1}.</th>
    <td>${code}</td><td>${name}</td><td>${name}</td><td class="mid">${unit}</td>
    <td class="box"><input type="checkbox" aria-label="NK ${code}"></td>
    <td>PDVOS</td><td>PDVOS</td><td></td><td></td>
    <td class="num">25 %</td><td class="num">15 %</td>
    <td class="box start"><input type="checkbox" aria-label="P.p. ${code}"></td>
    <td class="num">0 %</td><td class="num">0</td>
    <td></td><td></td><td></td><td></td>
  </tr>`).join("");
```
FILE: styles.css
```css
* { box-sizing: border-box; }

:root {
  --face: #efefef;
  --line: #a3a3a7;
  --dark: #707070;
  --blue: #b9d1ea;
}

html, body { height: 100%; }

body {
  margin: 0;
  display: flex;
  flex-direction: column;
  background: var(--face);
  color: #000;
  font: 26px/32px "DejaVu Sans Condensed", "DejaVu Sans", sans-serif;
  white-space: nowrap;
  overflow: hidden;
}

button, input, select { font: inherit; color: inherit; margin: 0; border-radius: 0; }
button { padding: 0; border: 0; background: none; }
h1, h2 { margin: 0; font-weight: normal; }
u { text-decoration-thickness: 2px; text-underline-offset: 4px; }

.sprite { position: absolute; }
.sprite .g { font-family: "Liberation Sans", sans-serif; font-weight: bold; }
.sprite .s { font-family: "Liberation Serif", serif; font-weight: bold; font-style: italic; }
.sprite .sb { font-family: "Liberation Serif", serif; font-weight: bold; }
.icon { display: block; width: 40px; height: 40px; flex: none; overflow: visible; }
.c-orange { color: #ffa878; }
.c-violet { color: #8080f8; }
.c-red { color: #f86858; }
.c-cyan { color: #58d8f8; }
.c-book { color: #f04828; }
.c-sky { color: #2c90f0; }

/* Application frame */
.titlebar {
  flex: none;
  display: flex;
  align-items: center;
  height: 58px;
  padding: 0 3px;
  gap: 4px;
  background: #0078d7;
  color: #fff;
}
.titlebar h1 { flex: 1; font-family: "Open Sans", "Noto Sans", sans-serif; font-size: 28px; }
.winctl { display: flex; }
.winctl button { width: 116px; height: 56px; display: grid; place-items: center; }
.winctl svg { width: 20px; height: 20px; overflow: visible; fill: none; stroke: #fff; stroke-width: 2; }

.menu {
  flex: none;
  display: flex;
  align-items: center;
  gap: 36px;
  height: 47px;
  padding: 2px 18px 0;
  background: #fff;
  font-size: 29px;
}
.menu a { color: inherit; text-decoration: none; }

.toolbar {
  flex: none;
  height: 67px;
  margin-top: 3px;
  border-top: 2px solid #999;
  background: var(--face);
  display: flex;
}
.tools {
  display: flex;
  align-items: center;
  padding: 0 20px 2px 10px;
  border-right: 2px solid #a8a8a8;
  border-top: 3px solid #fff;
}
.tools::before {
  content: "";
  width: 10px;
  height: 54px;
  margin-right: 12px;
  border-right: 2px solid #a0a0a0;
  border-bottom: 2px solid #a0a0a0;
}
.group { display: flex; gap: 18px; }
.group + .group { margin-left: 14px; padding-left: 14px; border-left: 2px solid #a8a8a8; min-height: 54px; align-items: center; }

.workspace { flex: 1; min-height: 0; display: flex; }
.side { flex: none; width: 68px; border-right: 2px solid #a0a0a0; }
.sidebar {
  display: flex;
  flex-direction: column;
  align-items: center;
  gap: 30px;
  padding: 12px 2px 12px 0;
  border: 2px solid #fff;
  border-width: 3px 0 0 3px;
  border-bottom: 3px solid #a0a0a0;
}
.grip { align-self: stretch; height: 16px; margin: 0 4px 4px; border: solid #a0a0a0; border-width: 0 2px 3px 0; background: linear-gradient(#fff 3px, transparent 3px 6px, #a0a0a0 6px 8px, #fff 8px 11px, transparent 11px); }
.sgroup { display: flex; flex-direction: column; gap: 15px; }
.ruled { position: relative; }
.ruled::before { content: ""; position: absolute; left: -8px; right: -8px; top: -18px; height: 4px; background: #a0a0a0; border-bottom: 2px solid #fff; }

.mdi {
  flex: 1;
  min-width: 0;
  display: flex;
  padding: 0 5px 2px 0;
  border: solid #858585;
  border-width: 5px 0 0 4px;
}
.window {
  flex: 1;
  min-width: 0;
  display: flex;
  flex-direction: column;
  padding: 0 18px 17px;
  border: 3px solid #1a1a1a;
  border-top-color: #404040;
  border-radius: 12px 12px 0 0;
  background: linear-gradient(#98b2d0 0, #bad2eb 74px, #b9d1ea 150px, #dce8f5 298px, #b9d1ea 302px);
  box-shadow: inset -3px -3px 0 #38c8dc, inset 3px 3px 0 #e4f0fa;
}
.caption { flex: none; display: flex; align-items: center; gap: 10px; height: 75px; padding: 6px 5px 0 4px; }
.caption h2 { flex: 1; font-size: 29px; }
.capctl { display: flex; gap: 6px; align-self: flex-start; margin-top: 15px; }
.capctl button {
  width: 79px;
  height: 44px;
  display: grid;
  place-items: center;
  border: 3px solid #66789c;
  border-radius: 5px;
  background: linear-gradient(#c4d6ea 0, #b2c8e2 45%, #94aecb 48%, #b4cee8 100%);
  box-shadow: inset 0 0 0 2px #d4e4f4;
}
.capctl .close { border-color: #581c28; background: linear-gradient(#eaa89c 0, #dc8878 45%, #b83c20 48%, #d47060 100%); box-shadow: inset 0 0 0 2px #eab0a4; }
.capctl svg { width: 28px; height: 24px; fill: #f2f2f2; stroke: #50566c; stroke-width: 2; }

.content { flex: 1; min-height: 0; display: flex; flex-direction: column; border-left: 2px solid #fff; background: var(--face); }

/* Filter form */
.top { display: flex; gap: 9px; }
.filter {
  display: grid;
  grid-template-columns: 158px 231px 186px 530px 165px 315px;
  grid-template-rows: repeat(8, 42px);
  row-gap: 6px;
  align-items: center;
  padding: 4px 2px 8px 0;
  border: solid #909090;
  border-width: 3px 4px 4px 0;
  border-top-color: #fff;
}
.filter label { text-align: right; padding-right: 10px; }
.filter .key { color: #8010d0; }
.filter .c1 { grid-column: 1; }
.filter .span3 { grid-column: 1 / 4; }
.filter .wide { grid-column: 2 / 5; }
input[type="text"], select {
  width: 100%;
  height: 42px;
  padding: 0;
  border: 3px solid #b0b0b6;
  background: #fff;
  outline: 0;
}
select {
  appearance: none;
  padding-bottom: 4px;
  background: #fff url("data:image/svg+xml,%3Csvg xmlns='http://www.w3.org/2000/svg' width='48' height='36'%3E%3Cpath fill='%23adadad' d='M0 0h48v36H0z'/%3E%3Cpath fill='%23e1e1e1' d='M3 3h42v31H3z'/%3E%3Cpath d='M14 17l9 10 9-10' fill='none' stroke='%23505050' stroke-width='3'/%3E%3C/svg%3E") right center no-repeat;
}
.filter .short { width: 235px; }
.filter .long { width: 307px; }
.katbr { grid-column: 5 / 7; display: flex; align-items: center; justify-content: flex-end; padding-right: 8px; }
.katbr input { width: 269px; }
.line { grid-column: 1 / 6; display: flex; align-items: center; }
.line select { flex: none; }
.line .tiny { padding-left: 4px; background-position: 66px center; }
.line .l1 { width: 228px; }
.line .l2 { width: 361px; padding-right: 14px; }
.line .l3 { width: 246px; }
.line .l4 { width: 419px; }
.tiny { width: 114px; }
.medium { width: 416px; }
input[type="checkbox"] {
  appearance: none;
  width: 32px;
  height: 32px;
  border: 3px solid #404040;
  background: #fff;
  flex: none;
}
.info, .flower { display: grid; place-items: center; border: 3px solid #adadad; background: #e1e1e1; }
.info { grid-area: 1 / 1 / 3 / 2; align-self: start; width: 50px; height: 50px; margin: 4px 0 0 8px; }
.info .icon { width: 36px; height: 36px; }
.filter label[for="sifra"], .filter #sifra { grid-row: 1; }
.filter label[for="paral"] { grid-row: 2; }
.flower { grid-area: 7 / 6 / 9 / 7; justify-self: end; align-self: end; width: 55px; height: 55px; margin-bottom: -6px; }

/* Action buttons */
.actions { display: flex; flex-direction: column; gap: 10px; width: 800px; padding-top: 1px; }
.arow { display: flex; gap: 11px; }
.arow.first { gap: 7px; padding-left: 2px; }
.arow.spread { justify-content: space-between; gap: 0; }
.arow.right { justify-content: flex-end; }
.arow button { height: 45px; border: 3px solid #adadad; background: #e1e1e1; line-height: 32px; padding-bottom: 3px; }
.arow .current { border: 5px solid #0078d7; padding-bottom: 2px; }
.arow .end { margin-left: auto; }
.w145 { width: 145px; }
.w165 { width: 165px; }
.w177 { width: 177px; }
.w180 { width: 180px; }
.w182 { width: 182px; }
.w192 { width: 192px; }
.w205 { width: 205px; }
.w210 { width: 210px; }
.w217 { width: 217px; }
.w257 { width: 257px; }
.w260 { width: 260px; }
.w262 { width: 262px; }

/* Data grid */
.gridpanel {
  flex: none;
  display: grid;
  grid-template-columns: minmax(0, 1fr) 41px;
  grid-template-rows: auto 43px;
  row-gap: 19px;
  padding: 18px 15px 13px 18px;
  border: solid var(--dark);
  border-width: 3px 4px 4px 0;
  border-top-color: #fff;
}
.grid { width: 100%; table-layout: fixed; border-collapse: separate; border-spacing: 0; }
.grid th, .grid td { padding: 0; overflow: hidden; height: 42px; line-height: 32px; }
.grid thead th {
  height: 40px;
  border: solid var(--dark);
  border-width: 2px 0 4px 2px;
  border-top-color: #fff;
  border-left-color: #a0a0a0;
  box-shadow: inset 2px 0 0 #fff;
  font-size: 28px;
}
.grid thead .cut { text-align: right; padding-right: 10px; }
.grid tbody td { background: #fff; border: solid var(--line); border-width: 0 0 6px 3px; }
.grid tbody tr:nth-child(odd) > * { height: 43px; }
.grid tbody tr:first-child > * { height: 45px; border-top-width: 4px; }
.grid .no {
  position: relative;
  font-weight: normal;
  text-align: right;
  padding-right: 4px;
  border: solid #a0a0a0;
  border-width: 0 2px 6px 0;
  border-right-color: var(--dark);
  box-shadow: inset 0 3px 0 #fafafa;
}
.grid td:nth-child(2) { border-left-width: 0; padding-left: 1px; }
.grid .mid { text-align: center; }
.grid .num { text-align: right; padding-right: 1px; }
.grid .box { background: var(--face); text-align: center; }
.grid .box.start { text-align: left; padding-left: 2px; }
.grid .box input { display: inline-block; vertical-align: top; }
.hand { position: absolute; left: 0; bottom: 0; width: 56px; height: 32px; }
.k-no { width: 102px; }
.k-sif { width: 228px; }
.k-naz { width: 467px; }
.k-kasa { width: 306px; }
.k-jm { width: 116px; }
.k-nk { width: 60px; }
.k-mp { width: 187px; }
.k-vp { width: 184px; }
.k-otk { width: 193px; }
.k-nak { width: 240px; }
.k-mpm { width: 177px; }
.k-vpm { width: 174px; }
.k-pp { width: 61px; }
.k-kalo { width: 150px; }
.k-per { width: 282px; }
.k-min, .k-max, .k-dop { width: 174px; }

.vscroll { display: flex; flex-direction: column; border-left: 2px solid #fff; margin-bottom: -19px; }
.vscroll button { height: 40px; display: grid; place-items: center; }
.vthumb { height: 517px; background: #cdcdcd; margin-bottom: auto; }
.vscroll svg, .hscroll svg { width: 20px; height: 20px; }
.down { transform: rotate(180deg); }
.left { transform: rotate(-90deg); }
.rightward { transform: rotate(90deg); }
.hscroll { display: flex; border-top: 3px solid #fff; }
.hscroll button { width: 42px; display: grid; place-items: center; }
.splitter { width: 24px; margin-top: -3px; background: #696969; }
.htrack { flex: 1; padding-bottom: 3px; }
.hthumb { width: 696px; height: 100%; background: #cdcdcd; }
.corner { background: #c8c8c8; }

/* Tabs and detail */
.tabs {
  flex: none;
  display: grid;
  grid-template-columns: 171px 242px 165px 135px 173px 200px 141px 194px 234px 341px 298px;
  align-items: end;
  height: 71px;
  padding-top: 4px;
}
.tabs button {
  display: flex;
  align-items: center;
  gap: 2px;
  height: 61px;
  margin-bottom: 2px;
  padding-left: 17px;
  border: solid #dcdcdc;
  border-width: 3px 2px 2px 0;
}
.tabs [aria-selected] { height: 67px; margin: 0; padding-bottom: 10px; background: #fff; font-weight: bold; font-size: 28px; border-bottom: 0; }
.pane { flex: 1; min-height: 0; display: flex; flex-direction: column; border: 7px solid #fff; border-top-width: 6px; margin: 0 4px 2px 1px; outline: 2px solid #dedede; outline-offset: 0; }
.detail {
  flex: 1;
  min-height: 0;
  margin: 0 0 56px 1px;
  border: solid #7a7a7a;
  border-width: 4px 2px 4px 3px;
  border-right-color: #e4e4e4;
  border-bottom-color: #fff;
}
.small { width: 1768px; }
.grid.small thead th:last-child { border-right: 3px solid var(--dark); }
.grid.small tbody td:last-child { border-right: 2px solid var(--line); }
.grid.small .no { background: #ff0; }
.grid.small .editing { padding: 0; }
.editing select { display: block; height: 37px; padding: 0; border: 0; border-left: 2px solid #000; margin-left: 4px; width: calc(100% - 4px); }
.d-no { width: 59px; }
.d-sk { width: 477px; }
.d-sif { width: 260px; }
.d-naz { width: 593px; }

/* Status bar */
.status {
  flex: none;
  display: grid;
  grid-template-columns: minmax(0, 1fr) 232px 74px 301px;
  height: 47px;
  padding-top: 9px;
  background: linear-gradient(#a0a0a0 2px, #fff 2px 8px, var(--face) 8px);
}
.status span { padding: 0 2px 0 4px; border-top: 3px solid #a8a8a8; border-left: 3px solid #b0b0b6; }
.status .copy { border-left-width: 2px; border-right: 8px solid #fff; }
.status .db { padding-left: 0; border-right: 3px solid #b0b0b6; }
.status .gap { border-right: 3px solid #b0b0b6; margin-right: 4px; margin-left: 2px; }
```
